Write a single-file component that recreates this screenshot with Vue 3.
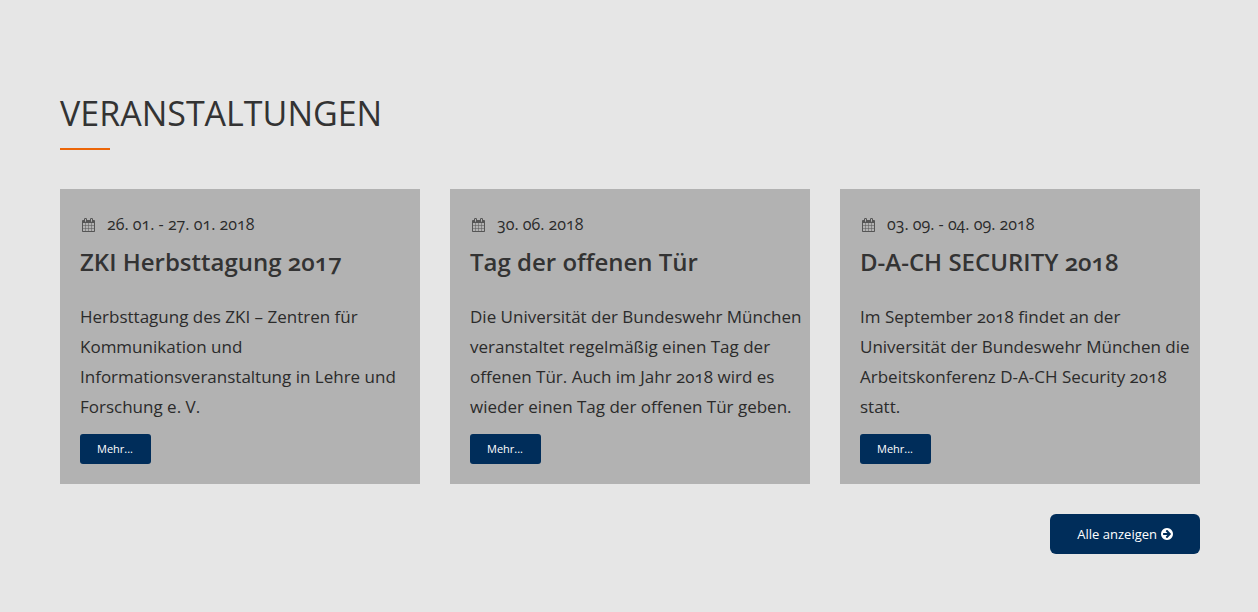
<script setup>
const events = [
  {
    date: '26. 01. - 27. 01. 2018',
    title: 'ZKI Herbsttagung 2017',
    text: 'Herbsttagung des ZKI – Zentren für Kommunikation und Informationsveranstaltung in Lehre und Forschung e. V.',
  },
  {
    date: '30. 06. 2018',
    title: 'Tag der offenen Tür',
    text: 'Die Universität der Bundeswehr München veranstaltet regelmäßig einen Tag der offenen Tür. Auch im Jahr 2018 wird es wieder einen Tag der offenen Tür geben.',
  },
  {
    date: '03. 09. - 04. 09. 2018',
    title: 'D-A-CH SECURITY 2018',
    text: 'Im September 2018 findet an der Universität der Bundeswehr München die Arbeitskonferenz D-A-CH Security 2018 statt.',
  },
]
</script>

<template>
  <section class="events">
    <h2 class="heading">VERANSTALTUNGEN</h2>
    <div class="grid">
      <article v-for="event in events" :key="event.title" class="card">
        <div class="date">
          <svg class="calendar" viewBox="0 0 1664 1792" aria-hidden="true">
            <path d="M128 1664h288v-288h-288v288zm352 0h320v-288h-320v288zm-352-352h288v-320h-288v320zm352 0h320v-320h-320v320zm-352-384h288v-288h-288v288zm736 736h320v-288h-320v288zm-384-736h320v-288h-320v288zm768 736h288v-288h-288v288zm-384-352h320v-320h-320v320zm-352-864v-288q0-13-9.500-22.500t-22.500-9.500h-64q-13 0-22.500 9.500t-9.500 22.500v288q0 13 9.500 22.500t22.500 9.500h64q13 0 22.500-9.500t9.500-22.500zm736 864h288v-320h-288v320zm-384-384h320v-288h-320v288zm384 0h288v-288h-288v288zm32-480v-288q0-13-9.500-22.500t-22.500-9.500h-64q-13 0-22.500 9.500t-9.500 22.500v288q0 13 9.500 22.500t22.500 9.500h64q13 0 22.500-9.500t9.500-22.500zm384-64v1280q0 52-38 90t-90 38h-1408q-52 0-90-38t-38-90v-1280q0-52 38-90t90-38h128v-96q0-66 47-113t113-47h64q66 0 113 47t47 113v96h384v-96q0-66 47-113t113-47h64q66 0 113 47t47 113v96h128q52 0 90 38t38 90z" />
          </svg>
          <span>{{ event.date }}</span>
        </div>
        <h3 class="title">{{ event.title }}</h3>
        <p class="text">{{ event.text }}</p>
        <a class="more" href="#">Mehr...</a>
      </article>
    </div>
    <div class="footer">
      <a class="all" href="#">
        <span>Alle anzeigen</span>
        <svg class="arrow" viewBox="128 128 1536 1536" aria-hidden="true">
          <path d="M1413 896q0-27-18-45l-91-91-362-362q-18-18-45-18t-45 18l-91 91q-18 18-18 45t18 45l189 189h-502q-26 0-45 19t-19 45v128q0 26 19 45t45 19h502l-189 189q-18 18-18 45t18 45l91 91q18 18 45 18t45-18l362-362 91-91q18-18 18-45zm251 0q0 209-103 385.500t-279.500 279.500-385.500 103-385.500-103-279.500-279.500-103-385.500 103-385.500 279.500-279.500 385.500-103 385.500 103 279.500 279.500 103 385.500z" />
        </svg>
      </a>
    </div>
  </section>
</template>

<style>
body {
  background: #e6e6e6;
}
</style>

<style scoped>
.events {
  padding: 88px 58px 58px 60px;
  font-family: "Open Sans", "Noto Sans", sans-serif;
  font-variant-numeric: oldstyle-nums;
  color: #333;
}

.heading {
  margin: 0 0 39px;
  font-size: 34px;
  line-height: 50px;
  font-weight: 400;
}

.heading::after {
  content: "";
  display: block;
  width: 50px;
  height: 2px;
  margin-top: 10px;
  background: #ec6608;
}

.grid {
  display: grid;
  grid-template-columns: repeat(3, minmax(0, 1fr));
  gap: 30px;
}

.card {
  padding: 20px 8px 20px 20px;
  background: #b2b2b2;
}

.date {
  display: flex;
  align-items: center;
  gap: 12px;
  padding-left: 2px;
  font-size: 16px;
  line-height: 30px;
  color: #2b2b2b;
}

.calendar {
  width: 13px;
  height: 14px;
  margin-top: 1px;
  fill: #555;
}

.title {
  margin: 5px 0 22px;
  font-size: 24px;
  line-height: 36px;
  font-weight: 600;
}

.text {
  margin: 0 0 12px;
  font-size: 17px;
  line-height: 30px;
  color: #2b2b2b;
}

.more,
.all {
  color: #fff;
  background: #002d5a;
  text-decoration: none;
}

.more {
  display: block;
  width: fit-content;
  padding: 0 18px 0 17px;
  border-radius: 3px;
  font-size: 11px;
  line-height: 30px;
}

.footer {
  display: flex;
  justify-content: flex-end;
  margin-top: 30px;
}

.all {
  display: flex;
  align-items: center;
  gap: 4px;
  padding: 0 27px;
  border-radius: 6px;
  font-size: 13px;
  line-height: 40px;
}

.arrow {
  width: 12px;
  height: 12px;
  fill: #fff;
}
</style>
